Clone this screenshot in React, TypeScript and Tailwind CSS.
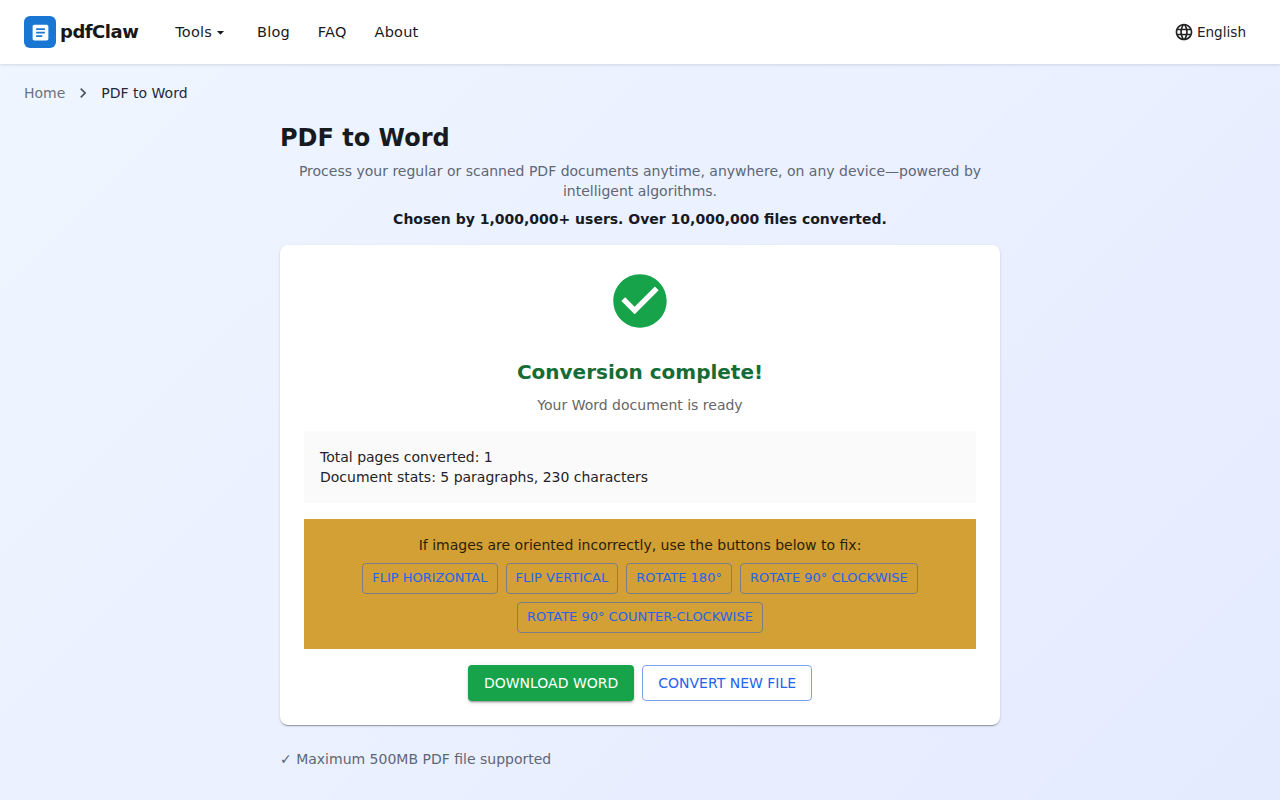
import React from 'react';

const orientationActions = [
  'Flip horizontal',
  'Flip vertical',
  'Rotate 180°',
  'Rotate 90° clockwise',
  'Rotate 90° counter-clockwise',
];

const navLinks = ['Blog', 'FAQ', 'About'];

const App: React.FC = () => {
  return (
    <div className="min-h-screen flex flex-col font-['DejaVu_Sans',sans-serif] bg-[linear-gradient(135deg,#eff6ff_0%,#e5ebff_100%)] text-[#171a1f]">
      {/* Header */}
      <header className="h-16 shrink-0 bg-white shadow-[0_1px_3px_rgba(0,0,0,0.12)] flex items-center justify-between px-6">
        <div className="flex items-center">
          <div className="flex items-center gap-1">
            <div className="w-8 h-8 rounded-md bg-[#1976d2] flex items-center justify-center">
              <svg viewBox="0 0 24 24" width="21" height="21" fill="white">
                <path d="M19 3H5c-1.1 0-2 .9-2 2v14c0 1.1.9 2 2 2h14c1.1 0 2-.9 2-2V5c0-1.1-.9-2-2-2zm-5 14H7v-2h7v2zm3-4H7v-2h10v2zm0-4H7V7h10v2z" />
              </svg>
            </div>
            <span className="text-lg font-bold leading-8 tracking-[-0.5px] text-[#171717]">pdfClaw</span>
          </div>
          <nav className="flex items-center ml-[37px] gap-7 text-[14.5px] leading-5 tracking-[0.2px]">
            <button className="flex items-center">
              Tools
              <svg viewBox="0 0 24 24" width="17" height="17" fill="currentColor">
                <path d="M7 10l5 5 5-5z" />
              </svg>
            </button>
            {navLinks.map(link => (
              <a key={link}>{link}</a>
            ))}
          </nav>
        </div>
        <button className="flex items-center gap-[3px] text-[13.6px] pr-[10px] text-[#222]">
          <svg viewBox="0 0 24 24" width="20" height="20" fill="currentColor">
            <path d="M11.99 2C6.47 2 2 6.48 2 12s4.47 10 9.99 10C17.52 22 22 17.52 22 12S17.52 2 11.99 2zm6.93 6h-2.95c-.32-1.25-.78-2.45-1.38-3.56 1.84.63 3.37 1.91 4.33 3.56zM12 4.04c.83 1.2 1.48 2.53 1.91 3.96h-3.82c.43-1.43 1.08-2.76 1.91-3.96zM4.26 14C4.1 13.36 4 12.69 4 12s.1-1.36.26-2h3.38c-.08.66-.14 1.32-.14 2 0 .68.06 1.34.14 2H4.26zm.82 2h2.95c.32 1.25.78 2.45 1.38 3.56-1.84-.63-3.37-1.9-4.33-3.56zm2.95-8H5.08c.96-1.66 2.49-2.93 4.33-3.56C8.81 5.55 8.35 6.75 8.03 8zM12 19.96c-.83-1.2-1.48-2.53-1.91-3.96h3.82c-.43 1.43-1.08 2.76-1.91 3.96zM14.34 14H9.66c-.09-.66-.16-1.32-.16-2 0-.68.07-1.35.16-2h4.68c.09.65.16 1.32.16 2 0 .68-.07 1.34-.16 2zm.25 5.56c.6-1.11 1.06-2.31 1.38-3.56h2.95c-.96 1.65-2.49 2.93-4.33 3.56zM16.36 14c.08-.66.14-1.32.14-2 0-.68-.06-1.34-.14-2h3.38c.16.64.26 1.31.26 2s-.1 1.36-.26 2h-3.38z" />
          </svg>
          English
        </button>
      </header>

      {/* Breadcrumb */}
      <div className="flex items-center px-6 pt-[19px] text-sm leading-5">
        <a className="text-[#6b7280]">Home</a>
        <svg viewBox="0 0 24 24" width="20" height="20" fill="#4b5563" className="mx-2">
          <path d="M10 6 8.59 7.41 13.17 12l-4.58 4.59L10 18l6-6z" />
        </svg>
        <span className="text-[#1f2937]">PDF to Word</span>
      </div>

      {/* Main */}
      <main className="w-[720px] mx-auto pt-[19px]">
        <h1 className="text-2xl leading-8 font-bold text-[#171a1f]">PDF to Word</h1>
        <p className="mt-[7px] text-sm leading-5 text-[#5f6675] text-center">
          Process your regular or scanned PDF documents anytime, anywhere, on any device—powered by intelligent algorithms.
        </p>
        <p className="mt-[8px] text-sm leading-5 font-bold text-center text-[#171a1f]">
          Chosen by 1,000,000+ users. Over 10,000,000 files converted.
        </p>

        {/* Result card */}
        <div className="mt-4 bg-white rounded-lg p-6 shadow-[0_2px_1px_-1px_rgba(0,0,0,0.2),0_1px_1px_0_rgba(0,0,0,0.14),0_1px_3px_0_rgba(0,0,0,0.12)]">
          <div className="flex justify-center">
            <svg viewBox="0 0 24 24" width="64" height="64" fill="#16a34a">
              <path d="M12 2C6.48 2 2 6.48 2 12s4.48 10 10 10 10-4.48 10-10S17.52 2 12 2zm-2 15l-5-5 1.41-1.41L10 14.17l7.59-7.59L19 8l-9 9z" />
            </svg>
          </div>
          <h2 className="mt-[23px] text-xl leading-8 font-bold text-center text-[#156c36]">Conversion complete!</h2>
          <p className="mt-[7px] text-sm leading-5 text-center text-[#666666]">Your Word document is ready</p>

          <div className="mt-4 bg-[#fafafa] p-4 text-sm leading-5 text-[#1f2328]">
            <div>Total pages converted: 1</div>
            <div>Document stats: 5 paragraphs, 230 characters</div>
          </div>

          <div className="mt-4 bg-[#d2a035] p-4 text-center">
            <p className="text-sm leading-5 text-[#2b1f08]">If images are oriented incorrectly, use the buttons below to fix:</p>
            <div className="mt-2 flex flex-wrap justify-center gap-2">
              {orientationActions.map(action => (
                <button
                  key={action}
                  className="h-[31px] px-[9px] pb-[2px] rounded border border-[#7a7f85] text-[13px] uppercase text-[#2563eb]"
                >
                  {action}
                </button>
              ))}
            </div>
          </div>

          <div className="mt-4 flex justify-center gap-2">
            <button className="h-9 px-4 rounded bg-[#16a34a] text-white text-sm uppercase shadow-[0_3px_1px_-2px_rgba(0,0,0,0.2),0_2px_2px_0_rgba(0,0,0,0.14),0_1px_5px_0_rgba(0,0,0,0.12)]">
              Download Word
            </button>
            <button className="h-9 px-[15px] rounded border border-[#7da2f0] bg-white text-[#2563eb] text-sm uppercase">
              Convert new file
            </button>
          </div>
        </div>

        <p className="mt-6 text-sm leading-5 text-[#5f6675]">✓ Maximum 500MB PDF file supported</p>
      </main>
    </div>
  );
};

export default App;
